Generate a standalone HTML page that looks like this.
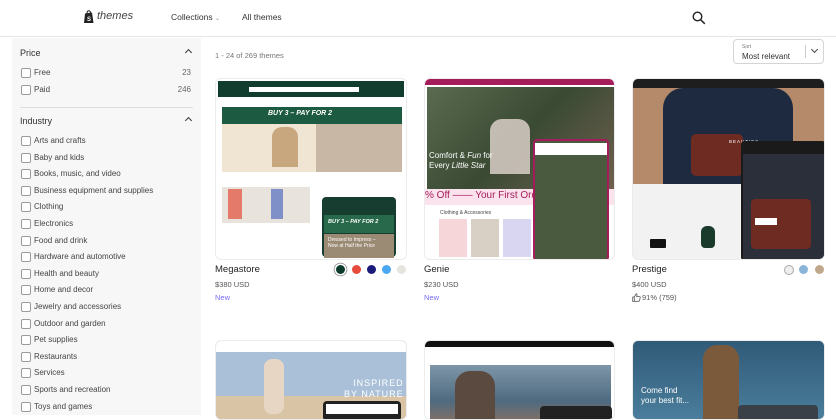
<!DOCTYPE html>
<html><head><meta charset="utf-8"><style>
*{margin:0;padding:0;box-sizing:border-box}
body{width:836px;height:415px;overflow:hidden;background:#fff;font-family:"Liberation Sans",sans-serif;color:#303030;position:relative}
.a{position:absolute}
.hdr{left:0;top:0;width:836px;height:37px;border-bottom:1px solid #e6e6e6;background:#fff}
.side{left:12px;top:38px;width:189px;height:377px;background:#f7f7f7}
.cb{position:absolute;left:9px;width:10px;height:10px;border:1px solid #9a9a9a;border-radius:2px;background:#fff}
.lb{position:absolute;left:22px;font-size:8px;color:#444}
.ct{position:absolute;right:10px;font-size:8px;color:#666}
.sec{position:absolute;left:8px;font-size:9px;color:#303030}
.car{position:absolute;right:10px;width:5px;height:5px;border-left:1.3px solid #333;border-top:1.3px solid #333;transform:rotate(45deg)}
.card{position:absolute;border-radius:6px;overflow:hidden;border:1px solid #ececec}
.nm{font-size:9.5px;color:#222}
.pr{font-size:7.5px;color:#555}
.new{font-size:7.5px;color:#7b6cf6}
.dot{position:absolute;width:9px;height:9px;border-radius:50%}
</style></head><body>
<div class="a hdr">
  <svg class="a" style="left:83px;top:10px" width="12" height="14" viewBox="0 0 12 14"><path d="M2 3.5 L9 2.5 L10.5 13 L1 13 Z" fill="#222"/><path d="M4 4 Q4 0.5 6 0.8 Q7.5 1 7.5 3.5" stroke="#222" fill="none" stroke-width="1"/><text x="4" y="11" font-size="6" fill="#fff" font-family="Liberation Sans" font-weight="bold">S</text></svg>
  <div class="a" style="left:97px;top:10px;font-size:11px;font-style:italic;color:#444">themes</div>
  <div class="a" style="left:171px;top:12px;font-size:8.5px;color:#333">Collections <span style="font-size:6px;color:#888">⌄</span></div>
  <div class="a" style="left:242px;top:12px;font-size:8.5px;color:#333">All themes</div>
  <svg class="a" style="left:692px;top:11px" width="14" height="14" viewBox="0 0 14 14"><circle cx="5.5" cy="5.5" r="4.3" stroke="#222" stroke-width="1.4" fill="none"/><path d="M8.6 8.6 L12.8 12.8" stroke="#222" stroke-width="1.5"/></svg>
</div>
<div class="a side">
  <div class="sec" style="top:10px">Price</div><div class="car" style="top:12px"></div>
  <div class="cb" style="top:30px"></div><div class="lb" style="top:30px">Free</div><div class="ct" style="top:30px">23</div>
  <div class="cb" style="top:47px"></div><div class="lb" style="top:47px">Paid</div><div class="ct" style="top:47px">246</div>
  <div style="position:absolute;left:8px;right:8px;top:69px;border-top:1px solid #ddd"></div>
  <div class="sec" style="top:78px">Industry</div><div class="car" style="top:80px"></div>
  <div class="cb" style="top:98px"></div><div class="lb" style="top:98px">Arts and crafts</div>
  <div class="cb" style="top:115px"></div><div class="lb" style="top:115px">Baby and kids</div>
  <div class="cb" style="top:131px"></div><div class="lb" style="top:131px">Books, music, and video</div>
  <div class="cb" style="top:148px"></div><div class="lb" style="top:148px">Business equipment and supplies</div>
  <div class="cb" style="top:164px"></div><div class="lb" style="top:164px">Clothing</div>
  <div class="cb" style="top:181px"></div><div class="lb" style="top:181px">Electronics</div>
  <div class="cb" style="top:198px"></div><div class="lb" style="top:198px">Food and drink</div>
  <div class="cb" style="top:214px"></div><div class="lb" style="top:214px">Hardware and automotive</div>
  <div class="cb" style="top:231px"></div><div class="lb" style="top:231px">Health and beauty</div>
  <div class="cb" style="top:247px"></div><div class="lb" style="top:247px">Home and decor</div>
  <div class="cb" style="top:264px"></div><div class="lb" style="top:264px">Jewelry and accessories</div>
  <div class="cb" style="top:281px"></div><div class="lb" style="top:281px">Outdoor and garden</div>
  <div class="cb" style="top:297px"></div><div class="lb" style="top:297px">Pet supplies</div>
  <div class="cb" style="top:314px"></div><div class="lb" style="top:314px">Restaurants</div>
  <div class="cb" style="top:330px"></div><div class="lb" style="top:330px">Services</div>
  <div class="cb" style="top:347px"></div><div class="lb" style="top:347px">Sports and recreation</div>
  <div class="cb" style="top:364px"></div><div class="lb" style="top:364px">Toys and games</div>
</div>
<div class="a" style="left:215px;top:51px;font-size:7.5px;color:#777">1 - 24 of 269 themes</div>
<div class="a" style="left:733px;top:39px;width:91px;height:25px;border:1px solid #d5d5d5;border-radius:4px;background:#fff">
  <div class="a" style="left:8px;top:4px;font-size:5px;color:#777">Sort</div>
  <div class="a" style="left:8px;top:12px;font-size:8px;color:#333">Most relevant</div>
  <div class="a" style="left:71px;top:5px;height:13px;border-left:1px solid #ccc"></div>
  <div class="a" style="left:78px;top:7px;width:5px;height:5px;border-right:1.3px solid #444;border-bottom:1.3px solid #444;transform:rotate(45deg)"></div>
</div>
<!-- Megastore -->
<div class="card" style="left:215px;top:78px;width:192px;height:182px;background:#fff">
  <div class="a" style="left:2px;top:2px;width:186px;height:16px;background:#103d2e"></div>
  <div class="a" style="left:33px;top:8px;width:110px;height:5px;background:#fff"></div>
  <div class="a" style="left:6px;top:28px;width:180px;height:17px;background:#1c5b41"></div>
  <div class="a" style="left:52px;top:31px;font-size:7px;font-weight:bold;font-style:italic;color:#fff">BUY 3 – PAY FOR 2</div>
  <div class="a" style="left:6px;top:45px;width:94px;height:48px;background:#f0e4d3"></div>
  <div class="a" style="left:56px;top:48px;width:26px;height:40px;background:#c9a77e;border-radius:10px 10px 0 0"></div>
  <div class="a" style="left:100px;top:45px;width:86px;height:48px;background:#c9b7a6"></div>
  <div class="a" style="left:6px;top:108px;width:88px;height:36px;background:#e8e3dc"></div>
  <div class="a" style="left:12px;top:110px;width:14px;height:30px;background:#e47b6a"></div>
  <div class="a" style="left:55px;top:110px;width:12px;height:30px;background:#7f8fc8"></div>
  <div class="a" style="left:106px;top:118px;width:74px;height:60px;background:#173d30;border-radius:4px"></div>
  <div class="a" style="left:108px;top:136px;width:70px;height:18px;background:#27694a"></div>
  <div class="a" style="left:112px;top:140px;font-size:5.5px;font-weight:bold;font-style:italic;color:#fff">BUY 3 – PAY FOR 2</div>
  <div class="a" style="left:108px;top:155px;width:70px;height:24px;background:#9b8a74"></div>
  <div class="a" style="left:112px;top:158px;font-size:5px;color:#fff;line-height:6px">Dressed to Impress –<br>Now at Half the Price</div>
</div>
<div class="a nm" style="left:215px;top:264px">Megastore</div>
<div class="a pr" style="left:215px;top:280px">$380 USD</div>
<div class="a new" style="left:215px;top:293px">New</div>
<div class="dot" style="left:336px;top:265px;background:#0d3b2b;box-shadow:0 0 0 1.5px #fff,0 0 0 2.3px #888"></div>
<div class="dot" style="left:352px;top:265px;background:#e84a3c"></div>
<div class="dot" style="left:367px;top:265px;background:#1a1a7a"></div>
<div class="dot" style="left:382px;top:265px;background:#4aa8f0"></div>
<div class="dot" style="left:397px;top:265px;background:#e6e4df"></div>
<!-- Genie -->
<div class="card" style="left:424px;top:78px;width:191px;height:182px;background:#fff">
  <div class="a" style="left:0;top:0;width:191px;height:6px;background:#a51c5a"></div>
  <div class="a" style="left:2px;top:8px;width:187px;height:102px;background:linear-gradient(135deg,#5a6b50,#3a4a33 50%,#706050)"></div>
  <div class="a" style="left:65px;top:40px;width:40px;height:55px;background:#d9cfc8;border-radius:12px 12px 0 0;opacity:.85"></div>
  <div class="a" style="left:4px;top:72px;font-size:8px;color:#fff;line-height:10px">Comfort &amp; <i>Fun</i> for<br>Every <i>Little Star</i></div>
  <div class="a" style="left:0;top:110px;width:191px;height:16px;background:#fbe3ee"></div>
  <div class="a" style="left:0;top:111px;font-size:10px;color:#a51c5a;white-space:nowrap">% Off —— Your First Order</div>
  <div class="a" style="left:15px;top:131px;font-size:5px;color:#444">Clothing &amp; Accessories</div>
  <div class="a" style="left:14px;top:140px;width:28px;height:38px;background:#f6d6d9"></div>
  <div class="a" style="left:46px;top:140px;width:28px;height:38px;background:#d8d0c4"></div>
  <div class="a" style="left:78px;top:140px;width:28px;height:38px;background:#d8d6f0"></div>
  <div class="a" style="left:108px;top:60px;width:76px;height:122px;background:#4a5a3e;border:2px solid #a51c5a;border-radius:4px"></div>
  <div class="a" style="left:110px;top:64px;width:72px;height:12px;background:#fff"></div>
</div>
<div class="a nm" style="left:424px;top:264px">Genie</div>
<div class="a pr" style="left:424px;top:280px">$230 USD</div>
<div class="a new" style="left:424px;top:293px">New</div>
<!-- Prestige -->
<div class="card" style="left:632px;top:78px;width:193px;height:182px;background:#f2f2f2">
  <div class="a" style="left:0;top:0;width:193px;height:9px;background:#1e1e1e"></div>
  <div class="a" style="left:0;top:9px;width:193px;height:96px;background:#b48a6a"></div>
  <div class="a" style="left:30px;top:9px;width:130px;height:96px;background:#1e2a3f;border-radius:20px 20px 0 0"></div>
  <div class="a" style="left:58px;top:55px;width:52px;height:42px;background:#6e2b22;border-radius:5px"></div>
  <div class="a" style="left:96px;top:60px;font-size:4.5px;color:#fff;letter-spacing:1px">BEAUTIES</div>
  <div class="a" style="left:108px;top:62px;width:85px;height:120px;background:#1a1a1a;border-radius:4px"></div>
  <div class="a" style="left:110px;top:75px;width:81px;height:107px;background:#2a2f3a"></div>
  <div class="a" style="left:118px;top:120px;width:60px;height:50px;background:#6e2b22;border-radius:4px"></div>
  <div class="a" style="left:122px;top:139px;width:22px;height:7px;background:#fff"></div>
  <div class="a" style="left:17px;top:160px;width:16px;height:9px;background:#111;border-radius:1px"></div>
  <div class="a" style="left:68px;top:147px;width:14px;height:22px;background:#1a3a2b;border-radius:6px 6px 4px 4px"></div>
</div>
<div class="a nm" style="left:632px;top:264px">Prestige</div>
<div class="a pr" style="left:632px;top:280px">$400 USD</div>
<svg class="a" style="left:632px;top:293px" width="9" height="9" viewBox="0 0 9 9"><path d="M0.7 4 H2.3 V8.3 H0.7 Z M2.3 4 L4.2 0.8 Q5.2 0.8 5 2.2 L4.7 3.6 H7.6 Q8.4 3.7 8.2 4.6 L7.5 7.7 Q7.3 8.3 6.6 8.3 H2.3" fill="none" stroke="#555" stroke-width="0.8"/></svg>
<div class="a pr" style="left:642px;top:293px">91% (759)</div>
<div class="dot" style="left:784px;top:265px;width:10px;height:10px;background:#eee;border:1px solid #aaa"></div>
<div class="dot" style="left:799px;top:265px;background:#8ab3d8"></div>
<div class="dot" style="left:815px;top:265px;background:#c0a98a"></div>
<!-- row 2 -->
<div class="card" style="left:215px;top:340px;width:192px;height:80px;background:#a9c0d8">
  <div class="a" style="left:0;top:0;width:192px;height:11px;background:#fff"></div>
  <div class="a" style="left:0;top:55px;width:192px;height:25px;background:#d9c4a6"></div>
  <div class="a" style="left:48px;top:18px;width:20px;height:55px;background:#e8d6c4;border-radius:8px"></div>
  <div class="a" style="left:128px;top:37px;font-size:9px;color:#fff;letter-spacing:1px;line-height:11px;text-align:right">INSPIRED<br>BY NATURE</div>
  <div class="a" style="left:107px;top:60px;width:78px;height:20px;background:#222;border-radius:4px"></div>
  <div class="a" style="left:110px;top:63px;width:72px;height:10px;background:#fff"></div>
</div>
<div class="card" style="left:424px;top:340px;width:191px;height:80px;background:#fff">
  <div class="a" style="left:0;top:0;width:191px;height:6px;background:#111"></div>
  <div class="a" style="left:5px;top:24px;width:181px;height:60px;background:linear-gradient(180deg,#7e96a8,#4f6a80 60%,#8a7060)"></div>
  <div class="a" style="left:30px;top:30px;width:40px;height:50px;background:#5a4a40;border-radius:15px 15px 0 0"></div>
  <div class="a" style="left:115px;top:65px;width:72px;height:20px;background:#222;border-radius:4px"></div>
</div>
<div class="card" style="left:632px;top:340px;width:193px;height:80px;background:linear-gradient(180deg,#305a78,#4a7e9c)">
  <div class="a" style="left:70px;top:4px;width:36px;height:76px;background:#7a5a3a;border-radius:14px 14px 0 0"></div>
  <div class="a" style="left:8px;top:45px;font-size:8px;color:#fff;line-height:10px">Come find<br>your best fit...</div>
  <div class="a" style="left:105px;top:64px;width:80px;height:20px;background:#3a4048;border-radius:4px"></div>
</div>
</body></html>
